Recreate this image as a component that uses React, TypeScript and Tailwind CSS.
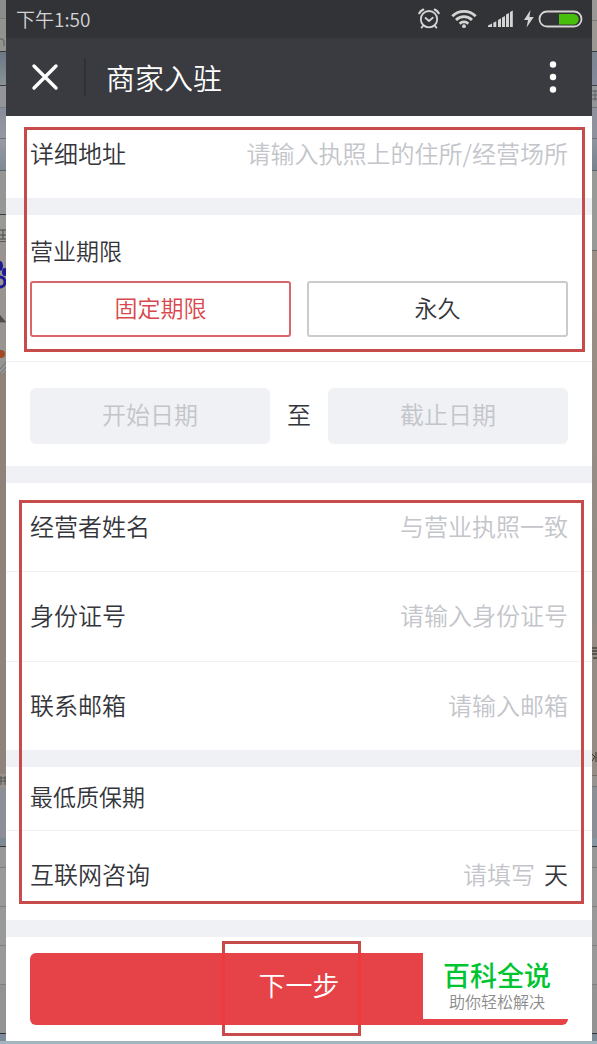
import { useState } from "react";
import type { ReactNode } from "react";

const leftBands = [
  "h-[18px] bg-[#8b8d8a]",
  "h-[33px] border-t border-[#7b7d7b] bg-[#91938f]",
  "h-[34px] border-t border-[#33383c] bg-linear-to-b from-[#6b7985] to-[#8a9197]",
  "h-[22px] border-t border-[#3c4043] bg-[#94959a]",
  "h-[31px] border-t border-[#7c7f86] bg-linear-to-b from-[#878e99] to-[#9698a4]",
  "h-[32px] border-t border-[#6f7378] bg-linear-to-b from-[#979aa4] to-[#7f8a93]",
  "h-[44px] border-t border-[#5d6468] bg-[#969794]",
  "h-[27px] border-t border-[#3a3b3a] bg-[#999a96]",
  "h-[81px] border-t border-[#5d5e5b] bg-[#999490]",
  "h-[52px] border-t border-[#7b7875] bg-[#979492]",
  "h-[400px] bg-linear-to-b from-[#8f8378] to-[#8e847c]",
  "h-[14px] bg-[#96938f]",
  "h-[50px] bg-[#8d8f98]",
  "h-[8px] bg-[#7d8992]",
  "h-[21px] border-t border-[#30373d] bg-[#979797]",
  "h-[39px] border-t border-[#7f7f7f] bg-[#999999]",
  "h-[39px] border-t border-[#7f7f7f] bg-[#999999]",
  "h-[39px] border-t border-[#7f7f7f] bg-[#999999]",
  "h-[49px] border-t border-[#7f7f7f] bg-[#939393]",
  "grow border-t border-[#2f3438] bg-[#7d8b98]",
];

const rightBands = [
  "h-[20px] bg-[#9a9896]",
  "h-[31px] border-t border-[#7d7b79] bg-[#9b9894]",
  "h-[34px] border-t border-[#33383c] bg-linear-to-b from-[#7b8591] to-[#83899a]",
  "h-[22px] border-t border-[#3c4043] bg-[#939598]",
  "h-[31px] border-t border-[#6f7378] bg-[#8f929d]",
  "h-[32px] border-t border-[#6f7378] bg-linear-to-b from-[#8f949e] to-[#77838d]",
  "h-[80px] border-t border-[#5d6468] bg-[#979a97]",
  "h-[375px] border-t border-[#6b6a66] bg-linear-to-b from-[#9b8e86] to-[#918c85]",
  "h-[150px] bg-[#958d85]",
  "h-[11px] border-t border-[#75706c] bg-[#96928f]",
  "h-[52px] border-t border-[#777777] bg-[#8c8e96]",
  "h-[8px] bg-[#8697a1]",
  "h-[21px] border-t border-[#30373d] bg-[#979797]",
  "h-[39px] border-t border-[#7f7f7f] bg-[#999999]",
  "h-[39px] border-t border-[#7f7f7f] bg-[#999999]",
  "h-[39px] border-t border-[#7f7f7f] bg-[#999999]",
  "h-[49px] border-t border-[#7f7f7f] bg-[#939393]",
  "grow border-t border-[#2f3438] bg-[#7d8b98]",
];

function App() {
  const [period, setPeriod] = useState<"fixed" | "forever">("fixed");

  return (
    <div className="bg-[#a3b5c0] pb-[3px] font-['Noto_Sans_CJK_SC',sans-serif] font-[350] text-[#34353a]">
      <div className="flex">
        <SideStrip bands={leftBands} width="w-[6px]">
          <LeftScraps />
        </SideStrip>

        <div className="min-w-0 flex-1 bg-white">
          <StatusBar />
          <TitleBar />

          <main>
            <div className="relative">
              <div className="h-[82px] px-6 pb-2">
                <Field id="address" label="详细地址" placeholder="请输入执照上的住所/经营场所" />
              </div>
              <Divider />
              <section className="border-b border-[#f1f1f2] px-6 pt-[18px] pb-6">
                <h2 className="text-[23px] leading-[34px]">营业期限</h2>
                <div className="mt-[14px] grid grid-cols-2 gap-4">
                  <PeriodButton active={period === "fixed"} onClick={() => setPeriod("fixed")}>
                    固定期限
                  </PeriodButton>
                  <PeriodButton active={period === "forever"} onClick={() => setPeriod("forever")}>
                    永久
                  </PeriodButton>
                </div>
              </section>
              <Highlight className="top-[11px] right-[7px] bottom-[10px] left-[18px]" />
            </div>

            <section className="flex items-center gap-[17px] px-6 pt-[26px] pb-[22px]">
              <DateInput label="开始日期" />
              <span className="pb-1 text-[24px] leading-9">至</span>
              <DateInput label="截止日期" />
            </section>
            <Divider />

            <div className="relative">
              <div className="h-[89px] border-b border-[#f1f1f2] px-6 pb-[3px]">
                <Field id="owner" label="经营者姓名" placeholder="与营业执照一致" />
              </div>
              <div className="h-[90px] border-b border-[#f1f1f2] px-6 pb-[3px]">
                <Field id="id-number" label="身份证号" placeholder="请输入身份证号" />
              </div>
              <div className="h-[88px] px-6 pb-[3px]">
                <Field id="email" label="联系邮箱" placeholder="请输入邮箱" />
              </div>
              <Divider />
              <h2 className="flex h-[64px] items-center border-b border-[#f1f1f2] px-6 pb-1 text-[23px]">
                最低质保期
              </h2>
              <div className="h-[89px] px-6 pb-[3px]">
                <Field id="warranty" label="互联网咨询" placeholder="请填写" unit="天" />
              </div>
              <Highlight className="top-[17px] right-[8px] bottom-[16px] left-[13px]" />
            </div>
            <Divider />
          </main>

          <footer className="relative px-6 pt-4 pb-4">
            <button
              type="button"
              className="block h-[72px] w-full rounded-md bg-[#e64348] pb-2 text-[27px] leading-[64px] text-white"
            >
              下一步
            </button>
            <Highlight className="top-[4px] bottom-[5px] left-[216px] w-[139px]" />
            <div className="pointer-events-none absolute top-4 bottom-4 left-[216px] w-[139px] border-x-3 border-[#ef3a3f]" />
            <div className="absolute right-[21px] bottom-[22px] flex h-[68px] w-[148px] flex-col items-center bg-white pt-[10px] font-['Liberation_Sans','Noto_Sans_CJK_SC',sans-serif]">
              <strong className="text-[27px] leading-8 font-medium text-[#00c531]">百科全说</strong>
              <span className="text-[16px] leading-5 text-[#8c8c8c]">助你轻松解决</span>
            </div>
          </footer>
        </div>

        <SideStrip bands={rightBands} width="w-[5px]">
          <RightScraps />
        </SideStrip>
      </div>
    </div>
  );
}

function StatusBar() {
  return (
    <div className="flex h-[38px] items-center justify-between bg-[#323337] pr-2 pl-[10px] text-[#d4d4d5]">
      <span className="text-[19px] leading-[30px]">下午1:50</span>
      <div className="flex items-center">
        <svg width="22" height="22" viewBox="0 0 22 22" fill="none" stroke="currentColor" strokeWidth="1.8" strokeLinecap="round">
          <circle cx="11" cy="11.2" r="8.2" />
          <path d="M7.5 10l3.5 3 3.8-3.2M5.2 17.6l-1.6 2M16.8 17.6l1.6 2" />
          <path d="M1.3 5.2Q2.4 2.6 5.2 1.6M20.7 5.2Q19.6 2.6 16.8 1.6" strokeWidth="2.2" />
        </svg>
        <svg className="ml-[11px]" width="26" height="20" viewBox="0 0 26 20" fill="none" stroke="currentColor" strokeWidth="2.8">
          <path d="M1.3 7.2a16.6 16.6 0 0 1 23.4 0M5 11a11.3 11.3 0 0 1 16 0M8.7 14.7a6.1 6.1 0 0 1 8.6 0" />
          <circle cx="13" cy="17.2" r="1.9" fill="currentColor" stroke="none" />
        </svg>
        <svg className="ml-[11px]" width="26" height="18" viewBox="0 0 26 18" fill="currentColor">
          <path d="M0 17v-1.5l4-2V17zM5.3 17v-4.3l3-1.5V17zM10 17v-7l3-1.8V17zM14 17V7.5L17 6v11zM18 17V4.6l3-1.6v14zM22 17V2l2.8-1.5V17z" />
        </svg>
        <svg className="ml-[9px]" width="12" height="18" viewBox="0 0 12 18" fill="currentColor">
          <path d="M7.5 0L1 10h4L3.6 17.5 10.8 7H6.4z" />
        </svg>
        <svg className="ml-[3px]" width="46" height="18" viewBox="0 0 46 18">
          <path d="M21 4h14.5a5 5 0 0 1 0 10.4H21z" fill="#47be0c" />
          <rect x="1.5" y="1.5" width="42" height="15" rx="7.5" fill="none" stroke="currentColor" strokeWidth="1.8" />
        </svg>
      </div>
    </div>
  );
}

function TitleBar() {
  return (
    <header className="flex h-[78px] items-center bg-[#3a3b40] text-white">
      <button type="button" aria-label="关闭" className="flex h-10 w-[78px] items-center justify-center">
        <svg width="28" height="28" viewBox="0 0 28 28" stroke="currentColor" strokeWidth="3.4" strokeLinecap="round">
          <path d="M3 3l22 22M25 3L3 25" />
        </svg>
      </button>
      <div className="h-[38px] w-[2px] bg-[#303135]" />
      <h1 className="ml-5 flex-1 text-[29px] leading-10">商家入驻</h1>
      <button type="button" aria-label="更多" className="flex h-10 w-[78px] items-center justify-center">
        <svg width="8" height="32" viewBox="0 0 8 32" fill="currentColor">
          <circle cx="4" cy="3.5" r="3.2" />
          <circle cx="4" cy="16" r="3.2" />
          <circle cx="4" cy="28.5" r="3.2" />
        </svg>
      </button>
    </header>
  );
}

type FieldProps = {
  id: string;
  label: string;
  placeholder: string;
  unit?: string;
};

function Field({ id, label, placeholder, unit }: FieldProps) {
  return (
    <div className="flex h-full items-center text-[24px] leading-9">
      <label htmlFor={id} className="shrink-0">
        {label}
      </label>
      <input
        id={id}
        type="text"
        placeholder={placeholder}
        className="ml-4 min-w-0 flex-1 bg-transparent text-right outline-none placeholder:text-[#c3c5ca]"
      />
      {unit && <span className="ml-[9px]">{unit}</span>}
    </div>
  );
}

function DateInput({ label }: { label: string }) {
  return (
    <input
      type="text"
      readOnly
      aria-label={label}
      placeholder={label}
      className="h-[56px] min-w-0 flex-1 rounded-md bg-[#f0f1f4] pb-[6px] text-center text-[24px] outline-none placeholder:text-[#c3c5ca]"
    />
  );
}

type PeriodButtonProps = {
  active: boolean;
  onClick: () => void;
  children: ReactNode;
};

function PeriodButton({ active, onClick, children }: PeriodButtonProps) {
  return (
    <button
      type="button"
      aria-pressed={active}
      onClick={onClick}
      className={`h-[56px] rounded-[3px] border-2 pb-1 text-[23px] leading-[48px] ${
        active ? "border-[#d9666a] text-[#d9484d]" : "border-[#cbcbcc]"
      }`}
    >
      {children}
    </button>
  );
}

function Divider() {
  return <div className="h-[17px] bg-[#f0f1f5]" />;
}

function Highlight({ className }: { className: string }) {
  return <div className={`pointer-events-none absolute border-3 border-[#c84b4b] ${className}`} />;
}

type SideStripProps = {
  bands: string[];
  width: string;
  children: ReactNode;
};

function SideStrip({ bands, width, children }: SideStripProps) {
  return (
    <div aria-hidden="true" className={`relative flex shrink-0 flex-col overflow-hidden ${width}`}>
      {bands.map((band, index) => (
        <div key={index} className={band} />
      ))}
      {children}
    </div>
  );
}

// pieces of the desktop that peek out on the left side
function LeftScraps() {
  return (
    <svg className="absolute top-0 left-0" width="6" height="1041" viewBox="0 0 6 1041" fill="none">
      <path d="M0 39h2q2 0 2 3v4" stroke="#5c5d5c" strokeWidth="1" />
      <path d="M0 230h6M0 235h6M0 239h6M3 230v9" stroke="#4b4b49" strokeWidth="1" />
      <ellipse cx="0" cy="266" rx="3" ry="5" fill="#1d1a96" />
      <ellipse cx="5" cy="272" rx="3" ry="4" fill="#1d1a96" />
      <circle cx="0" cy="282" r="5" stroke="#1d1a96" strokeWidth="3" />
      <path d="M0 315l6 7H0z" fill="#4e4d4d" />
      <ellipse cx="1" cy="354" rx="4" ry="4" fill="#a34a22" />
      <path d="M0 369l6-7M0 374l6-7M3 375l3-4" stroke="#6c7478" strokeWidth="1" />
      <path d="M0 778h6M0 781h6M1 776v9M5 776v9" stroke="#55524f" strokeWidth="1" />
    </svg>
  );
}

function RightScraps() {
  return (
    <svg className="absolute top-0 left-0" width="5" height="1041" viewBox="0 0 5 1041" fill="none">
      <path d="M0 91h5M0 95h5M0 99h5M3 90v11" stroke="#5c6064" strokeWidth="1" />
      <path d="M0 648h5M0 651h5M0 654h5M1 658h4" stroke="#1d1c1b" strokeWidth="1" />
      <path d="M0 754l3 3-3 4M4 752v10" stroke="#3a342f" strokeWidth="1" />
    </svg>
  );
}

export default App;
